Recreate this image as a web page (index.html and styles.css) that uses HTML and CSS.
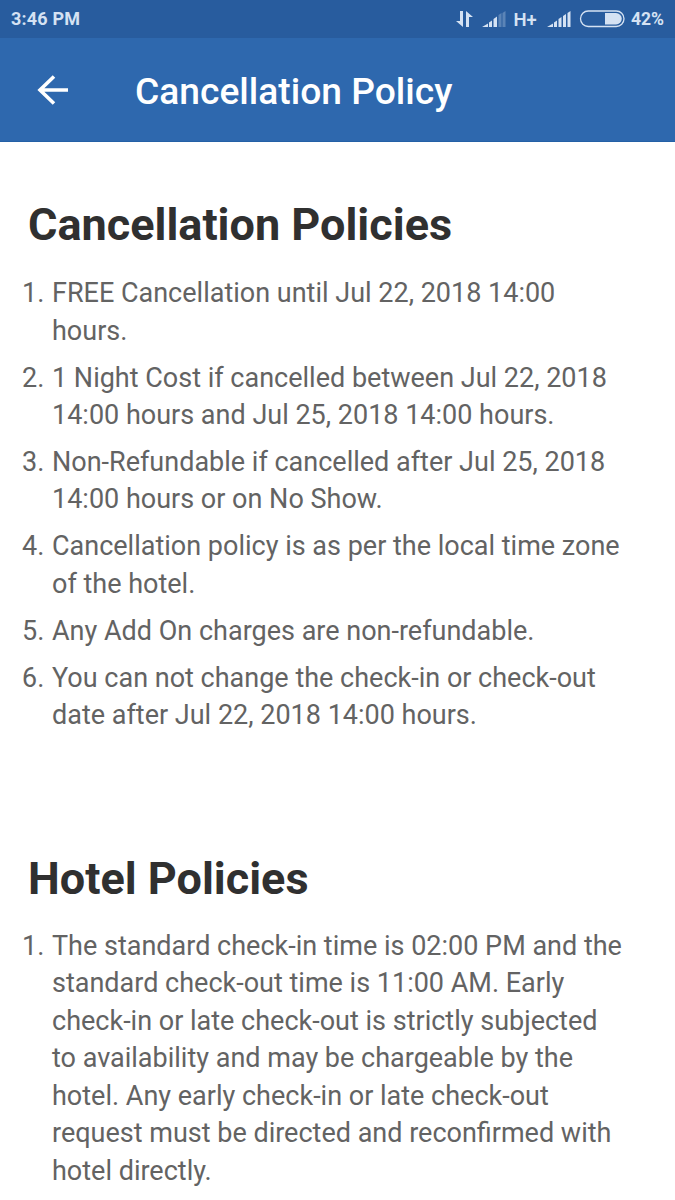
FILE: index.html
```html
<!DOCTYPE html>
<html lang="en">

<head>
    <meta charset="UTF-8">
    <meta name="viewport" content="width=device-width, initial-scale=1.0">
    <title>Cancellation Policy</title>
    <link rel="stylesheet" href="styles.css">
</head>

<body>
    <div class="status-bar">
        <span class="time">3:46 PM</span>
        <svg class="status-icons" viewBox="455 9 172 20" width="172" height="20">
            <!-- data arrows -->
            <path class="fill" d="M460 11h3v16l-7-6h4zM466 27V11l7 6h-4v10z" />
            <!-- sim 1 -->
            <path class="fill" d="M482 27l6-3.500V27zM489 27v-4.500l3-2V27zM493.500 27v-8l3.500-2.500V27z" />
            <path class="fill dim" d="M498.500 27V15l3-2v14zM502.500 27V13l3-2v16z" />
            <text class="network" x="513.500" y="25.500">H+</text>
            <!-- sim 2 -->
            <path class="fill" d="M547 27l6-3.500V27zM554 27v-4.500l3-2V27zM558.500 27v-8l3-2V27zM563 27V16l3-2v13zM567.500 27V13l3-2v16z" />
            <!-- battery -->
            <rect class="line" x="580.500" y="11" width="43.500" height="15.500" rx="7.750" />
            <path class="fill" d="M605 13h11a5.750 5.750 0 0 1 0 11.500h-11z" />
        </svg>
        <span class="battery">42%</span>
    </div>

    <header class="app-bar">
        <svg class="back" viewBox="0 0 32 32" width="32" height="32">
            <path d="M31 16H3M17 2.500L3 16L17 29.500" />
        </svg>
        <h1>Cancellation Policy</h1>
    </header>

    <main>
        <section class="policies cancellation">
            <h2>Cancellation Policies</h2>
            <ol>
                <li>FREE Cancellation until Jul 22, 2018 14:00<br>hours.</li>
                <li>1 Night Cost if cancelled between Jul 22, 2018<br>14:00 hours and Jul 25, 2018 14:00 hours.</li>
                <li>Non-Refundable if cancelled after Jul 25, 2018<br>14:00 hours or on No Show.</li>
                <li>Cancellation policy is as per the local time zone<br>of the hotel.</li>
                <li>Any Add On charges are non-refundable.</li>
                <li>You can not change the check-in or check-out<br>date after Jul 22, 2018 14:00 hours.</li>
            </ol>
        </section>

        <section class="policies hotel">
            <h2>Hotel Policies</h2>
            <ol>
                <li>The standard check-in time is 02:00 PM and the<br>standard check-out time is 11:00 AM. Early<br>check-in or late check-out is strictly subjected<br>to availability and may be chargeable by the<br>hotel. Any early check-in or late check-out<br>request must be directed and reconfirmed with<br>hotel directly.</li>
            </ol>
        </section>
    </main>
</body>

</html>
```

FILE: styles.css
```css
* {
    box-sizing: border-box;
}

body {
    margin: 0;
    background: #fff;
    font-family: Roboto, sans-serif;
}

.status-bar {
    display: flex;
    align-items: center;
    height: 38px;
    padding: 0 12px 0 11px;
    background: #285c9e;
    color: #d5e2f3;
    font-size: 18px;
    font-weight: 700;
}

.time {
    margin-bottom: 1px;
    letter-spacing: 0.2px;
}

.battery {
    width: 32px;
    font-size: 17.5px;
}

.status-icons {
    margin-left: auto;
    margin-right: 4px;
}

.line {
    fill: none;
    stroke: #d5e2f3;
    stroke-width: 1.3;
}

.fill {
    fill: #d5e2f3;
}

.dim {
    opacity: 0.3;
}

.network {
    fill: #d5e2f3;
    font-size: 18.5px;
    font-weight: 600;
}

.app-bar {
    display: flex;
    align-items: center;
    height: 104px;
    padding: 1px 37px 0;
    background: #2e68ae;
    border-bottom: 1px solid #2460a6;
    color: #fff;
}

.back path {
    fill: none;
    stroke: #fff;
    stroke-width: 3.6;
}

.app-bar h1 {
    margin: 2px 0 0 66px;
    font-size: 37.2px;
    font-weight: 500;
    white-space: nowrap;
}

main {
    padding-top: 55px;
}

.cancellation {
    height: 654px;
}

.policies h2 {
    margin: 0 0 20.5px 28px;
    color: #303030;
    font-size: 45px;
    font-weight: 700;
    line-height: 56px;
}

.cancellation h2 {
    margin-bottom: 22.2px;
}

.policies ol {
    margin: 0;
    padding-left: 51px;
    color: #636363;
    font-size: 27px;
    line-height: 37.5px;
    white-space: nowrap;
}

.policies li {
    margin-bottom: 9.4px;
    padding-left: 1px;
}

.policies li:last-child {
    margin-bottom: 0;
}
```
